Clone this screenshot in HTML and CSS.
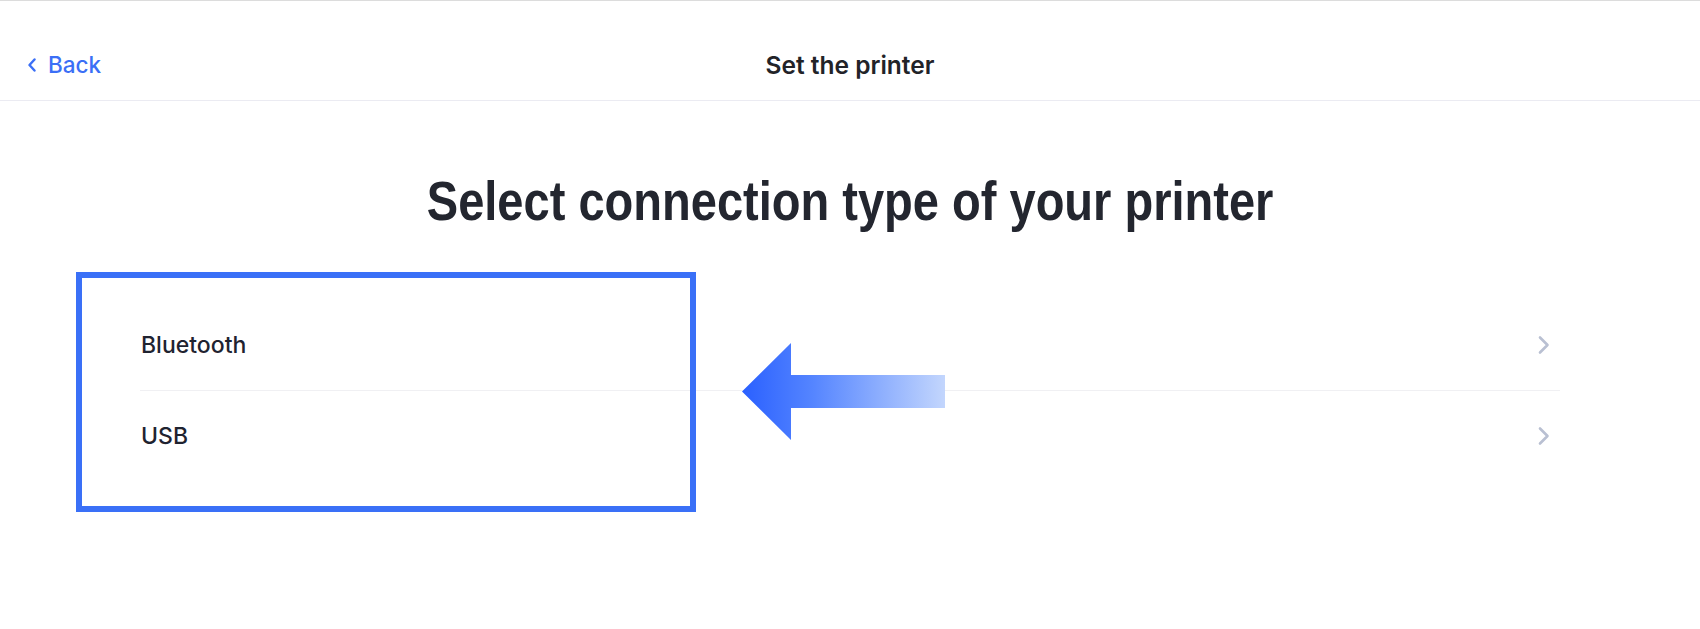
FILE: index.html
```html
<!DOCTYPE html>
<html lang="en">
<head>
<meta charset="utf-8">
<title>Set the printer</title>
<link rel="stylesheet" href="styles.css">
</head>
<body>
<header class="topbar">
  <a class="back" href="#">
    <svg class="back-icon" width="10" height="14" viewBox="0 0 10 14" aria-hidden="true">
      <path d="M7.5 1.5 L2.5 7 L7.5 12.5" fill="none" stroke="#3b6ff6" stroke-width="2.4" stroke-linecap="round" stroke-linejoin="round"/>
    </svg>
    <span>Back</span>
  </a>
  <div class="title">Set the printer</div>
  <div class="spacer"></div>
</header>
<main class="page">
  <h1 class="heading"><span class="heading-text">Select connection type of your printer</span></h1>
  <ul class="options">
    <li class="option">
      <span class="option-label">Bluetooth</span>
      <svg class="chev" width="14" height="20" viewBox="0 0 14 20" aria-hidden="true">
        <path d="M3 2.5 L10.5 10 L3 17.5" fill="none" stroke="#b9c0d2" stroke-width="2.6" stroke-linecap="round" stroke-linejoin="round"/>
      </svg>
    </li>
    <li class="option">
      <span class="option-label">USB</span>
      <svg class="chev" width="14" height="20" viewBox="0 0 14 20" aria-hidden="true">
        <path d="M3 2.5 L10.5 10 L3 17.5" fill="none" stroke="#b9c0d2" stroke-width="2.6" stroke-linecap="round" stroke-linejoin="round"/>
      </svg>
    </li>
  </ul>
  <div class="highlight-box"></div>
  <svg class="pointer-arrow" width="204" height="98" viewBox="0 0 204 98" aria-hidden="true">
    <defs>
      <linearGradient id="arrowGrad" x1="0" y1="0" x2="1" y2="0">
        <stop offset="0" stop-color="#2a60ff"/>
        <stop offset="0.35" stop-color="#5585ff"/>
        <stop offset="1" stop-color="#c3d6fd"/>
      </linearGradient>
    </defs>
    <polygon points="0,48.5 49,0 49,32 203,32 203,65 49,65 49,97" fill="url(#arrowGrad)"/>
  </svg>
</main>
</body>
</html>
```

FILE: styles.css
```css
* {
  box-sizing: border-box;
}

html, body {
  margin: 0;
  padding: 0;
  background: #ffffff;
}

body {
  font-family: "Inter", "Noto Sans", "Liberation Sans", sans-serif;
  color: #1f2330;
}

.topbar {
  display: grid;
  grid-template-columns: 1fr auto 1fr;
  align-items: center;
  height: 101px;
  padding: 28px 27px 0 27px;
  border-top: 1px solid #dcdcdc;
  border-bottom: 1px solid #ebebf2;
}

.back {
  display: flex;
  align-items: center;
  gap: 11px;
  color: #3b6ff6;
  text-decoration: none;
  font-size: 22.5px;
  font-weight: 500;
  justify-self: start;
}

.back-icon {
  display: block;
}

.title {
  font-size: 24.5px;
  font-weight: 600;
  color: #222328;
}

.page {
  position: relative;
  width: 100%;
  padding: 73px 0 120px 0;
}

.heading {
  margin: 0;
  text-align: center;
  font-family: "Liberation Sans", Arial, sans-serif;
  font-weight: 700;
  font-size: 55px;
  line-height: 55px;
  color: #23262f;
}

.heading-text {
  display: inline-block;
  transform: scaleX(0.855);
  transform-origin: center;
}

.options {
  list-style: none;
  margin: 71px auto 0 auto;
  padding: 0;
  width: 1420px;
}

.option {
  display: flex;
  align-items: center;
  justify-content: space-between;
  height: 90px;
  padding: 0 9px 0 1px;
}

.option + .option {
  border-top: 1px solid #f0f0f3;
}

.option-label {
  font-size: 23px;
  font-weight: 500;
  color: #1f2330;
}

.chev {
  display: block;
}

.highlight-box {
  position: absolute;
  left: 76px;
  top: 171px;
  width: 620px;
  height: 240px;
  border: 6px solid #3a70f7;
}

.pointer-arrow {
  position: absolute;
  left: 742px;
  top: 242px;
  display: block;
}
```
